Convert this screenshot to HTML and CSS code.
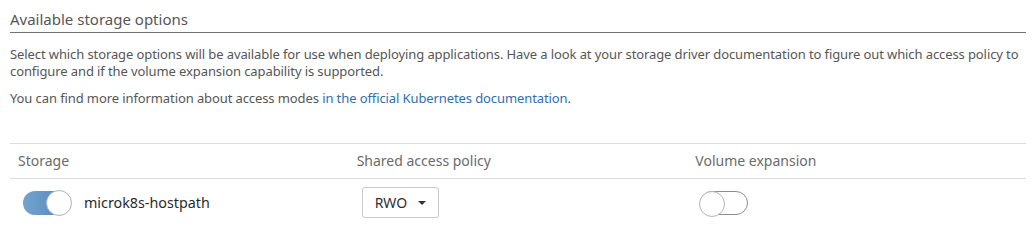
FILE: index.html
```html
<!DOCTYPE html>
<html>
<head>
<meta charset="utf-8">
<link rel="stylesheet" href="styles.css">
</head>
<body>
<div class="page">
  <h3 class="title">Available storage options</h3>
  <p class="desc">Select which storage options will be available for use when deploying applications. Have a look at your storage driver documentation to figure out which access policy to configure and if the volume expansion capability is supported.</p>
  <p class="desc">You can find more information about access modes <a class="link" href="#">in the official Kubernetes documentation</a>.</p>
  <table class="grid">
    <thead>
      <tr>
        <th>Storage</th>
        <th>Shared access policy</th>
        <th>Volume expansion</th>
      </tr>
    </thead>
    <tbody>
      <tr>
        <td>
          <div class="storage">
            <span class="toggle on"><span class="knob"></span></span>
            <span class="name">microk8s-hostpath</span>
          </div>
        </td>
        <td>
          <div class="select">RWO <span class="caret"></span></div>
        </td>
        <td>
          <span class="toggle off"><span class="knob"></span></span>
        </td>
      </tr>
    </tbody>
  </table>
</div>
</body>
</html>
```

FILE: styles.css
```css
html, body {
  margin: 0;
  padding: 0;
  background: #fff;
}
body {
  font-family: "Noto Sans", "Open Sans", sans-serif;
  color: #565656;
  font-size: 13px;
}
.page {
  padding: 9px 8px 0 10px;
}
.title {
  margin: 0;
  font-size: 15px;
  font-weight: 400;
  color: #565656;
  line-height: 20px;
  padding-bottom: 3px;
  border-bottom: 1px solid #727272;
}
.desc {
  margin: 13px 0 0 0;
  line-height: 17px;
  letter-spacing: -0.1px;
}
.desc + .desc {
  margin-top: 10px;
}
.link {
  color: #2f6fb0;
  text-decoration: none;
}
.grid {
  width: 100%;
  margin-top: 36px;
  border-collapse: collapse;
  table-layout: fixed;
}
.grid th {
  text-align: left;
  font-weight: 400;
  font-size: 14px;
  line-height: 18px;
  color: #6b6b6b;
  padding: 8px 8px;
  height: 18px;
  border-top: 1px solid #dcdcdc;
  border-bottom: 1px solid #dcdcdc;
}
.grid td {
  padding: 8px 8px 8px 13px;
  height: 30px;
  vertical-align: middle;
  color: #333;
}
.storage {
  display: flex;
  align-items: center;
  gap: 13px;
}
.toggle {
  display: inline-block;
  position: relative;
  width: 48px;
  height: 24px;
  border-radius: 13px;
  box-sizing: border-box;
  vertical-align: middle;
}
.toggle.on {
  background: linear-gradient(90deg, #74a3cd, #4f86bd);
}
.toggle.off {
  border: 1px solid #8c8c8c;
  background: #fff;
}
.knob {
  position: absolute;
  top: -1px;
  width: 26px;
  height: 26px;
  border-radius: 50%;
  background: #fff;
  border: 1px solid #b3b3b3;
  box-sizing: border-box;
}
.toggle.on .knob {
  right: -1px;
}
.toggle.off .knob {
  left: -2px;
}
.name {
  font-size: 14.3px;
  color: #2a2a2a;
}
.select {
  display: inline-flex;
  align-items: center;
  gap: 11px;
  box-sizing: border-box;
  height: 31px;
  padding: 0 12px 0 12px;
  border: 1px solid #c8c8c8;
  border-radius: 3px;
  color: #2f2f2f;
  font-size: 14px;
}
.caret {
  width: 0;
  height: 0;
  border-left: 4px solid transparent;
  border-right: 4px solid transparent;
  border-top: 4px solid #333;
}
```
